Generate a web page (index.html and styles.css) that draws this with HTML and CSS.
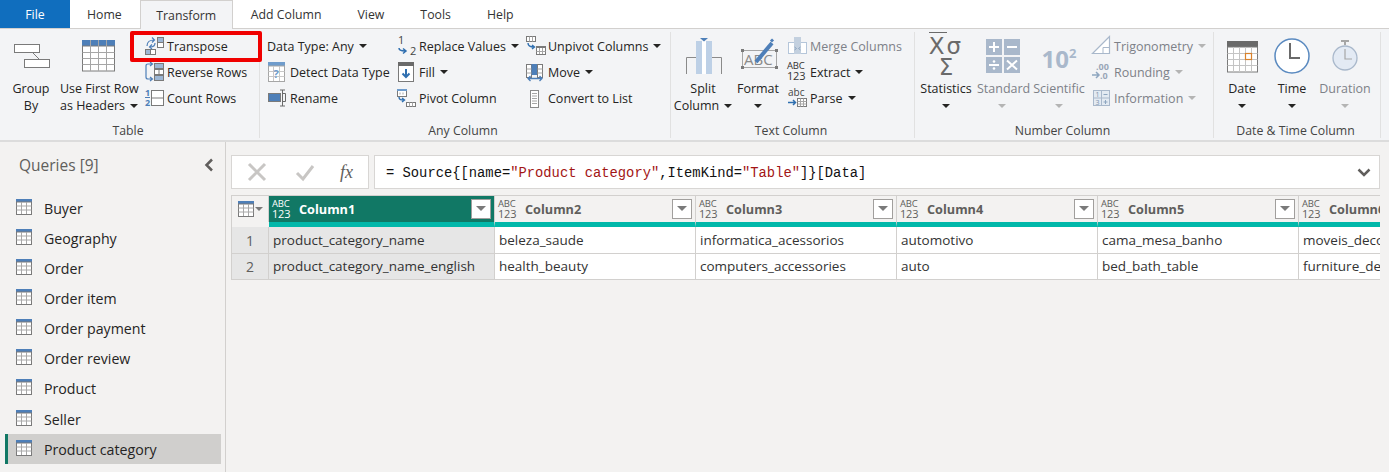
FILE: index.html
```html
<!DOCTYPE html>
<html lang="en">
<head>
<meta charset="utf-8">
<title>Power Query Editor</title>
<link rel="stylesheet" href="styles.css">
</head>
<body>
<svg class="defs" aria-hidden="true">
  <symbol id="tbl" viewBox="0 0 16 16">
    <rect x="0" y="0" width="16" height="3" fill="#4e7fb8"/>
    <rect x=".5" y="3" width="15" height="12.5" fill="#fff" stroke="#7a7a7a"/>
    <path d="M5.500 3v12M10.500 3v12M.5 7h15M.5 11h15" stroke="#a8a8a8" fill="none"/>
  </symbol>
</svg>

<nav class="tabs">
  <div class="tab tab-file">File</div>
  <div class="tab">Home</div>
  <div class="tab tab-active">Transform</div>
  <div class="tab">Add Column</div>
  <div class="tab">View</div>
  <div class="tab">Tools</div>
  <div class="tab">Help</div>
</nav>

<section class="ribbon">
  <div class="group g1">
    <div class="group-body">
      <div class="big w58 ml2">
        <svg class="big-ic" viewBox="0 0 58 47"><path d="M31 20l6 6" stroke="#7a7a7a" fill="none"/><rect x="12.500" y="11.500" width="25" height="8" fill="#fff" stroke="#7a7a7a"/><rect x="22.500" y="26.500" width="25" height="8" fill="#fff" stroke="#7a7a7a"/></svg>
        <div class="big-t">Group<br>By</div>
      </div>
      <div class="big w78">
        <svg class="big-ic" viewBox="0 0 78 47"><rect x="22" y="7" width="33" height="6" fill="#4e7fb8"/><rect x="22.500" y="13" width="32" height="25" fill="#fff" stroke="#7a7a7a"/><path d="M30.500 7v31M38.500 7v31M46.500 7v31M22.500 19.500h32M22.500 25.500h32M22.500 31.500h32" stroke="#a6a6a6" fill="none"/></svg>
        <div class="big-t">Use First Row<br>as Headers<i class="caret"></i></div>
      </div>
      <div class="col ml6">
        <div class="sm"><svg class="sm-ic" viewBox="0 0 23 22"><rect x="13.500" y="2.500" width="6" height="5" fill="#9db7d5" stroke="#7a7a7a"/><rect x="13.500" y="7.500" width="6" height="5" fill="#fff" stroke="#7a7a7a"/><rect x="1.500" y="14.500" width="5" height="5" fill="#9db7d5" stroke="#7a7a7a"/><rect x="6.500" y="14.500" width="5" height="5" fill="#fff" stroke="#7a7a7a"/><path d="M3 11C3 7 6 5 10 5M8 2.500L10.500 5 8 7.500M11 8c0 3-2 4-5 4M8 9.500L5.500 12 8 14" stroke="#4e7fb8" fill="none" stroke-width="1.200"/></svg><span>Transpose</span></div>
        <div class="sm"><svg class="sm-ic" viewBox="0 0 23 22"><path d="M8 3H4Q2 3 2 5V16Q2 18 4 18H8M6 1L8.500 3 6 5M6 16L8.500 18 6 20" stroke="#4e7fb8" fill="none" stroke-width="1.200"/><rect x="10.500" y="2.500" width="9" height="5" fill="#9db7d5" stroke="#7a7a7a"/><rect x="10.500" y="8.500" width="9" height="5" fill="#fff" stroke="#7a7a7a"/><path d="M15 8.500v5" stroke="#7a7a7a"/><rect x="10.500" y="14.500" width="9" height="5" fill="#9db7d5" stroke="#7a7a7a"/></svg><span>Reverse Rows</span></div>
        <div class="sm"><svg class="sm-ic" viewBox="0 0 23 22"><text class="ic-num" x="1" y="9">1</text><path d="M1 10.500h5" stroke="#4e7fb8"/><text class="ic-num" x="1" y="19">2</text><rect x="7.500" y="3.500" width="12" height="15" fill="#fff" stroke="#7a7a7a"/><path d="M7.500 11h12" stroke="#7a7a7a"/></svg><span>Count Rows</span></div>
      </div>
    </div>
    <div class="group-label">Table</div>
  </div>

  <div class="group g2">
    <div class="group-body">
      <div class="col w129">
        <div class="sm"><span>Data Type: Any</span><i class="caret"></i></div>
        <div class="sm"><svg class="sm-ic" viewBox="0 0 23 22"><rect x="1" y="1" width="17" height="4" fill="#6f9ccc"/><rect x="1.500" y="5" width="16" height="15.500" fill="#fff" stroke="#a6a6a6"/><path d="M6.500 5v15M12.500 5v15M1.500 10.500h16M1.500 15.500h16" stroke="#c8c8c8" fill="none"/><text class="ic-q" x="6.500" y="17">?</text></svg><span>Detect Data Type</span></div>
        <div class="sm"><svg class="sm-ic" viewBox="0 0 23 22"><rect x="1.500" y="6.500" width="12" height="8" fill="#4e7fb8" stroke="#7a7a7a"/><path d="M13 3h5M13 19h5M15.500 3v16M15.500 6.500h3v8h-3" stroke="#6a6a6a" fill="none"/></svg><span>Rename</span></div>
      </div>
      <div class="col w129">
        <div class="sm"><svg class="sm-ic" viewBox="0 0 23 22"><text class="ic-t" x="2" y="9">1</text><text class="ic-t" x="14" y="20">2</text><path d="M3 13c0 2 2 3 6 3M7 13.500L10 16 7 18.500" stroke="#2f6fb0" fill="none" stroke-width="1.500"/></svg><span>Replace Values</span><i class="caret"></i></div>
        <div class="sm"><svg class="sm-ic" viewBox="0 0 23 22"><rect x="2.500" y="1.500" width="15" height="19" fill="#fff" stroke="#7a7a7a"/><rect x="2" y="1" width="16" height="4" fill="#6a6a6a"/><path d="M10 8v8M6.500 12.500L10 16l3.500-3.500" stroke="#2f6fb0" fill="none" stroke-width="2"/></svg><span>Fill</span><i class="caret"></i></div>
        <div class="sm"><svg class="sm-ic" viewBox="0 0 23 22"><rect x="1.500" y="2.500" width="9" height="7" fill="#fff" stroke="#7a7a7a"/><rect x="1" y="2" width="10" height="2" fill="#6f9ccc"/><path d="M4 5.500v2M7 5.500v2" stroke="#a6a6a6"/><path d="M3 10c0 3 2 3 5 3M6 11l2.500 2L6 15" stroke="#2f6fb0" fill="none" stroke-width="1.400"/><rect x="10.500" y="15.500" width="9" height="4" fill="#fff" stroke="#7a7a7a"/><path d="M13.500 15.500v4M16.500 15.500v4" stroke="#a6a6a6"/></svg><span>Pivot Column</span></div>
      </div>
      <div class="col">
        <div class="sm"><svg class="sm-ic" viewBox="0 0 23 22"><rect x="1.500" y="1.500" width="9" height="5" fill="#fff" stroke="#7a7a7a"/><path d="M4.500 1.500v5M7.500 1.500v5" stroke="#a6a6a6"/><path d="M3 8c0 3 3 4 6 4M7 10l2.500 2L7 14" stroke="#2f6fb0" fill="none" stroke-width="1.400"/><rect x="11.500" y="11.500" width="9" height="8" fill="#fff" stroke="#7a7a7a"/><rect x="11" y="11" width="10" height="2" fill="#7a7a7a"/><path d="M14.500 13v6M17.500 13v6M11.500 16.500h9" stroke="#a6a6a6"/></svg><span>Unpivot Columns</span><i class="caret"></i></div>
        <div class="sm"><svg class="sm-ic" viewBox="0 0 23 22"><rect x="1.500" y="3.500" width="5" height="13" fill="#fff" stroke="#7a7a7a"/><rect x="6.500" y="3" width="6" height="11" fill="#4e7fb8"/><rect x="12.500" y="3.500" width="5" height="13" fill="#fff" stroke="#7a7a7a"/><path d="M1.500 8h5M1.500 12h5M12.500 8h5M12.500 12h5" stroke="#a6a6a6"/><path d="M3 17.500h14M5.500 15L3 17.500 5.500 20M14.500 15l2.500 2.500-2.500 2.500" stroke="#4e7fb8" fill="none" stroke-width="1.300"/></svg><span>Move</span><i class="caret"></i></div>
        <div class="sm"><svg class="sm-ic" viewBox="0 0 23 22"><rect x="5.500" y="3.500" width="8" height="17" fill="#fff" stroke="#8a8a8a"/><path d="M7 6.500h5M7 9h5M7 11.500h5M7 14h5M7 16.500h5" stroke="#a6a6a6"/></svg><span>Convert to List</span></div>
      </div>
    </div>
    <div class="group-label">Any Column</div>
  </div>

  <div class="group g3">
    <div class="group-body">
      <div class="big w64">
        <svg class="big-ic" viewBox="0 0 64 47"><path d="M15.500 41V24.500h10M50.500 41V24.500h-10" fill="none" stroke="#8a8a8a"/><rect x="25" y="8" width="6" height="33" fill="#bdd0e6"/><rect x="35" y="8" width="6" height="33" fill="#bdd0e6"/><path d="M31 8h4v33h-4z" fill="#fff"/><path d="M29 5h8l-4 3.500z" fill="#4e7fb8"/></svg>
        <div class="big-t">Split<br>Column<i class="caret"></i></div>
      </div>
      <div class="big w46">
        <svg class="big-ic" viewBox="0 0 46 47"><rect x="7.500" y="17.500" width="34" height="17" fill="none" stroke="#a6a6a6"/><rect x="6" y="16" width="3" height="3" fill="#7a7a7a"/><rect x="40" y="16" width="3" height="3" fill="#7a7a7a"/><rect x="6" y="33" width="3" height="3" fill="#7a7a7a"/><rect x="40" y="33" width="3" height="3" fill="#7a7a7a"/><text class="ic-abc" x="9" y="32">ABC</text><path d="M21 29L37 10" stroke="#4e7fb8" stroke-width="4" fill="none"/><path d="M38 8.500L36 6.500" stroke="#4e7fb8" stroke-width="3"/></svg>
        <div class="big-t">Format<br><i class="caret solo"></i></div>
      </div>
      <div class="col ml6">
        <div class="sm off"><svg class="sm-ic" viewBox="0 0 23 22"><rect x="1.500" y="7.500" width="18" height="11" fill="#fff" stroke="#b5c6da"/><rect x="7" y="2" width="7" height="17" fill="#c3d0df"/><path d="M7.500 12l2 1.500-2 1.500M13.500 12l-2 1.500 2 1.500" stroke="#8ea6c0" fill="none"/></svg><span>Merge Columns</span></div>
        <div class="sm"><span class="ic-abc123 sm-ic">ABC<br><em>123</em></span><span>Extract</span><i class="caret"></i></div>
        <div class="sm"><svg class="sm-ic" viewBox="0 0 23 22"><text class="ic-lc" x="1" y="9">abc</text><path d="M1 15.500h7M6 13l2.500 2.500L6 18" stroke="#2f6fb0" fill="none" stroke-width="1.500"/><rect x="10.500" y="11.500" width="9" height="8" fill="#fff" stroke="#7a7a7a"/><path d="M13.500 11.500v8M16.500 11.500v8M10.500 14.500h9M10.500 17h9" stroke="#a6a6a6"/></svg><span>Parse</span><i class="caret"></i></div>
      </div>
    </div>
    <div class="group-label">Text Column</div>
  </div>

  <div class="group g4">
    <div class="group-body">
      <div class="big w62">
        <div class="big-ic stat"><span class="stat-top"><span class="xbar">X</span>σ</span><span>Σ</span></div>
        <div class="big-t">Statistics<br><i class="caret solo"></i></div>
      </div>
      <div class="big w50 off">
        <svg class="big-ic" viewBox="0 0 50 47"><rect x="9" y="6" width="16" height="16" fill="#a9b8cb"/><rect x="27" y="6" width="16" height="16" fill="#a9b8cb"/><rect x="9" y="24" width="16" height="16" fill="#a9b8cb"/><rect x="27" y="24" width="16" height="16" fill="#a9b8cb"/><path d="M12 14h10M17 9v10M30 14h10M12 32h10M30 27.500l10 9M40 27.500l-10 9" stroke="#fff" stroke-width="2" fill="none"/><circle cx="17" cy="28.500" r="1.300" fill="#fff"/><circle cx="17" cy="35.500" r="1.300" fill="#fff"/></svg>
        <div class="big-t">Standard<br><i class="caret solo"></i></div>
      </div>
      <div class="big w52 ml6 off">
        <div class="big-ic sci">10<sup>2</sup></div>
        <div class="big-t">Scientific<br><i class="caret solo"></i></div>
      </div>
      <div class="col ml6">
        <div class="sm off"><svg class="sm-ic" viewBox="0 0 23 22"><path d="M1.500 18.500L18.500 1.500v17z" fill="#fff" stroke="#a9b8cb" stroke-width="1.200"/><path d="M12 18.500v-6h6.500" fill="none" stroke="#a9b8cb"/></svg><span>Trigonometry</span><i class="caret"></i></div>
        <div class="sm off"><svg class="sm-ic" viewBox="0 0 23 22"><text class="ic-rnd" x="5" y="9">.00</text><text class="ic-rnd" x="9" y="18">.0</text><path d="M1 14h7M5 11l3 3-3 3" stroke="#8ea6c0" fill="none" stroke-width="1.500"/></svg><span>Rounding</span><i class="caret"></i></div>
        <div class="sm off"><svg class="sm-ic" viewBox="0 0 23 22"><rect x="2.500" y="3.500" width="16" height="15" fill="#e3eaf2" stroke="#a9b8cb"/><path d="M10.500 3.500v15M2.500 11h16" stroke="#a9b8cb"/><text class="ic-info" x="4.500" y="10">1</text><text class="ic-info" x="4.500" y="17.500">3</text><path d="M12.500 7.500h4M12.500 15h4M14.500 13v4" stroke="#8ea6c0"/></svg><span>Information</span><i class="caret"></i></div>
      </div>
    </div>
    <div class="group-label">Number Column</div>
  </div>

  <div class="group g5">
    <div class="group-body">
      <div class="big w56">
        <svg class="big-ic" viewBox="0 0 56 47"><rect x="13" y="8" width="31" height="6" fill="#6a6a6a"/><rect x="13.500" y="14" width="30" height="25" fill="#fff" stroke="#7a7a7a"/><path d="M19.500 14v25M25.500 14v25M31.500 14v25M37.500 14v25M13.500 20.500h30M13.500 26.500h30M13.500 32.500h30" stroke="#c4c4c4" fill="none"/><rect x="31.500" y="20.500" width="6" height="6" fill="#fff" stroke="#d9822b" stroke-width="1.200"/></svg>
        <div class="big-t">Date<br><i class="caret solo"></i></div>
      </div>
      <div class="big w44">
        <svg class="big-ic" viewBox="0 0 44 47"><circle cx="22" cy="23" r="17" fill="#fff" stroke="#5a8ac0" stroke-width="1.500"/><path d="M20 10v15h10" fill="none" stroke="#6a6a6a" stroke-width="2"/></svg>
        <div class="big-t">Time<br><i class="caret solo"></i></div>
      </div>
      <div class="big w62 off">
        <svg class="big-ic" viewBox="0 0 62 47"><path d="M27 8h8M31 8v4" stroke="#a6a6a6" stroke-width="2" fill="none"/><circle cx="31" cy="25" r="12" fill="#e3eaf4" stroke="#a9b8cb" stroke-width="1.300"/><path d="M31 16v10h7" fill="none" stroke="#a6a6a6" stroke-width="1.200"/></svg>
        <div class="big-t">Duration<br><i class="caret solo"></i></div>
      </div>
    </div>
    <div class="group-label">Date &amp; Time Column</div>
  </div>
  <div class="highlight"></div>
</section>

<main class="main">
  <aside class="sidebar">
    <div class="side-head">
      <span>Queries [9]</span>
      <svg class="chev" viewBox="0 0 10 14"><path d="M8 1.500L2.500 7 8 12.500" fill="none" stroke="#605e5c" stroke-width="2.500"/></svg>
    </div>
    <ul class="queries">
      <li class="q"><svg class="q-ic"><use href="#tbl"/></svg>Buyer</li>
      <li class="q"><svg class="q-ic"><use href="#tbl"/></svg>Geography</li>
      <li class="q"><svg class="q-ic"><use href="#tbl"/></svg>Order</li>
      <li class="q"><svg class="q-ic"><use href="#tbl"/></svg>Order item</li>
      <li class="q"><svg class="q-ic"><use href="#tbl"/></svg>Order payment</li>
      <li class="q"><svg class="q-ic"><use href="#tbl"/></svg>Order review</li>
      <li class="q"><svg class="q-ic"><use href="#tbl"/></svg>Product</li>
      <li class="q"><svg class="q-ic"><use href="#tbl"/></svg>Seller</li>
      <li class="q q-sel"><svg class="q-ic"><use href="#tbl"/></svg>Product category</li>
    </ul>
  </aside>

  <div class="content">
    <div class="fbar">
      <div class="fbtns">
        <svg class="fb-ic" viewBox="0 0 20 20"><path d="M2 2l16 16M18 2L2 18" stroke="#c8c6c4" stroke-width="3" fill="none"/></svg>
        <svg class="fb-ic" viewBox="0 0 20 20"><path d="M2 11l6 6L18 4" stroke="#c8c6c4" stroke-width="3" fill="none"/></svg>
        <span class="fx">fx</span>
      </div>
      <div class="formula">
        <code>= Source{[name=<b>"Product category"</b>,ItemKind=<b>"Table"</b>]}[Data]</code>
        <svg class="fchev" viewBox="0 0 14 9"><path d="M1.500 1.500L7 7l5.500-5.500" fill="none" stroke="#605e5c" stroke-width="2.500"/></svg>
      </div>
    </div>

    <div class="grid">
      <div class="corner"><svg class="corner-ic"><use href="#tbl"/></svg><i class="caret grey"></i></div>
      <div class="ch ch-sel"><span class="abc">ABC<br><em>123</em></span><span class="ch-name">Column1</span><span class="fbtn"></span></div>
      <div class="ch"><span class="abc">ABC<br><em>123</em></span><span class="ch-name">Column2</span><span class="fbtn"></span></div>
      <div class="ch"><span class="abc">ABC<br><em>123</em></span><span class="ch-name">Column3</span><span class="fbtn"></span></div>
      <div class="ch"><span class="abc">ABC<br><em>123</em></span><span class="ch-name">Column4</span><span class="fbtn"></span></div>
      <div class="ch"><span class="abc">ABC<br><em>123</em></span><span class="ch-name">Column5</span><span class="fbtn"></span></div>
      <div class="ch"><span class="abc">ABC<br><em>123</em></span><span class="ch-name">Column6</span><span class="fbtn"></span></div>

      <div class="rn">1</div>
      <div class="c c-sel">product_category_name</div>
      <div class="c">beleza_saude</div>
      <div class="c">informatica_acessorios</div>
      <div class="c">automotivo</div>
      <div class="c">cama_mesa_banho</div>
      <div class="c">moveis_decoracao</div>

      <div class="rn">2</div>
      <div class="c c-sel">product_category_name_english</div>
      <div class="c">health_beauty</div>
      <div class="c">computers_accessories</div>
      <div class="c">auto</div>
      <div class="c">bed_bath_table</div>
      <div class="c">furniture_decor</div>
    </div>
  </div>
</main>
</body>
</html>
```
FILE: styles.css
```css
* { box-sizing: border-box; }
html, body { margin: 0; height: 100%; }
body {
  width: 1389px;
  height: 472px;
  overflow: hidden;
  background: #f3f2f1;
  color: #252423;
  font: 12.500px/17px "Open Sans", "Noto Sans", sans-serif;
}
.defs { display: none; }
em { font-style: normal; }

/* tabs */
.tabs {
  display: flex;
  height: 29px;
  background: #fff;
  border-bottom: 1px solid #d2d0ce;
  font-size: 12.300px;
  line-height: 29px;
}
.tab { padding: 0 18px; color: #333; }
.tab-file { width: 70px; height: 28px; padding: 0; text-align: center; background: #106ebe; color: #fff; }
.tab-file + .tab { padding-left: 17px; }
.tab-active {
  height: 29px;
  padding: 0 15.500px;
  background: #f3f4f6;
  border: 1px solid #d2d0ce;
  border-bottom: 0;
}

/* ribbon */
.ribbon {
  position: relative;
  display: flex;
  height: 113px;
  background: #f3f4f6;
  border-bottom: 2px solid #dcdcdc;
}
.group {
  display: flex;
  flex-direction: column;
  height: 111px;
  padding-top: 4px;
  position: relative;
}
.group::after {
  content: "";
  position: absolute;
  right: 0;
  top: 3px;
  bottom: 2px;
  width: 1px;
  background: #e1e1e1;
}
.g1 { width: 260px; }
.g2 { width: 411px; padding-left: 7px; }
.g3 { width: 244px; }
.g4 { width: 299px; }
.g5 { width: 167px; }
.group-body { display: flex; height: 90px; }
.group-label {
  height: 16px;
  padding-right: 4px;
  font-size: 12.300px;
  line-height: 16px;
  text-align: center;
  color: #444;
  white-space: nowrap;
}
.g2 .group-label { padding-right: 12px; }

.big { display: flex; flex-direction: column; align-items: stretch; text-align: center; white-space: nowrap; }
.big-ic { display: block; width: 100%; height: 47px; flex: none; overflow: visible; }
.big-t { line-height: 17px; }
.col { display: flex; flex-direction: column; }
.sm { display: flex; align-items: center; height: 26px; white-space: nowrap; }
.sm-ic { display: block; width: 23px; height: 22px; flex: none; overflow: visible; }
.off { color: #7d8188; }
.off .caret { border-top-color: #b4b4b4; }

.w44 { width: 44px; }
.w46 { width: 46px; }
.w50 { width: 50px; }
.w52 { width: 52px; }
.w56 { width: 56px; }
.w58 { width: 58px; }
.w62 { width: 62px; }
.w64 { width: 64px; }
.w78 { width: 78px; }
.w129 { width: 129px; }
.ml2 { margin-left: 2px; }
.ml6 { margin-left: 6px; }

.caret {
  display: inline-block;
  width: 0;
  height: 0;
  margin-left: 5px;
  vertical-align: 2px;
  border-left: 4px solid transparent;
  border-right: 4px solid transparent;
  border-top: 4px solid #252423;
}
.caret.solo { margin-left: 0; }
.caret.grey { border-top-color: #7a7a7a; margin-left: 1px; }

/* text inside icons */
.ic-num { font: 700 9px "Open Sans", sans-serif; fill: #4e7fb8; }
.ic-t { font: 11px "Open Sans", sans-serif; fill: #444; }
.ic-q { font: 700 11px "Open Sans", sans-serif; fill: #6f9ccc; }
.ic-abc { font: 15px "Open Sans", sans-serif; fill: #8a8a8a; }
.ic-lc { font: 10px "Open Sans", sans-serif; fill: #444; }
.ic-rnd { font: 700 9px "Open Sans", sans-serif; fill: #9aa7b8; }
.ic-info { font: 7px "Open Sans", sans-serif; fill: #7d93ad; }
.ic-abc123 { font-size: 9.500px; line-height: 10px; color: #333; letter-spacing: -.2px; }
.ic-abc123 em { font-size: 11px; }
.stat {
  display: flex;
  flex-direction: column;
  align-items: center;
  padding-top: 3px;
  font: 23px/21px "DejaVu Sans", sans-serif;
  color: #6a6a6a;
}
.stat-top { letter-spacing: 2px; }
.xbar { border-top: 1px solid #6a6a6a; }
.sci {
  padding-top: 10px;
  font: 700 24px/32px "Open Sans", sans-serif;
  color: #a9b8cb;
}
.sci sup { font-size: 13px; line-height: 0; vertical-align: 10px; }

.highlight {
  position: absolute;
  left: 130px;
  top: 2px;
  width: 132px;
  height: 31px;
  border: 4px solid #f00000;
  border-radius: 2px;
}

/* main */
.main { display: flex; height: 330px; }
.sidebar { width: 226px; flex: none; border-right: 1px solid #d2d0ce; }
.side-head {
  display: flex;
  align-items: center;
  justify-content: space-between;
  height: 51px;
  padding: 0 11px 5px 19px;
  font-size: 15.500px;
  color: #605e5c;
}
.chev { width: 10px; height: 14px; }
.queries { list-style: none; margin: 0; padding: 0; }
.q {
  display: flex;
  align-items: center;
  gap: 12px;
  height: 30.150px;
  margin: 0 4px 0 5px;
  padding-left: 11px;
  font-size: 14.200px;
}
.q-ic { width: 16px; height: 16px; flex: none; margin-top: -3px; }
.q-sel { background: #d0cfcd; border-left: 3px solid #117865; padding-left: 8px; }

.content { flex: 1; padding: 13px 9px 0 5px; }
.fbar { display: flex; gap: 5px; height: 34px; }
.fbtns {
  display: flex;
  align-items: center;
  width: 138px;
  padding-left: 15px;
  background: #fff;
  border: 1px solid #d8d6d4;
}
.fb-ic { width: 20px; height: 20px; flex: none; margin-right: 28px; }
.fx { font: italic 18px "Liberation Serif", serif; color: #605e5c; margin-left: -3px; }
.formula {
  flex: 1;
  display: flex;
  align-items: center;
  justify-content: space-between;
  padding: 0 8px 0 11px;
  background: #fff;
  border: 1px solid #d8d6d4;
}
.formula code { padding-top: 2px; font: 13.800px "Liberation Mono", monospace; color: #111; white-space: pre; }
.formula b { font-weight: 400; color: #a31515; }
.fchev { width: 14px; height: 9px; }

.grid {
  display: grid;
  grid-template-columns: 37px 226px repeat(5, 201px);
  grid-template-rows: 31px 27px 26px;
  width: 1149px;
  margin-top: 6px;
  overflow: hidden;
  border-top: 1px solid #d2d0ce;
  border-left: 1px solid #d2d0ce;
}
.corner {
  display: flex;
  align-items: center;
  justify-content: center;
  height: 26px;
  border-right: 1px solid #d2d0ce;
}
.corner-ic { width: 16px; height: 16px; }
.ch {
  display: flex;
  align-items: center;
  padding: 0 3px 0 3px;
  border-right: 1px solid #d2d0ce;
  border-bottom: 5px solid #01b8aa;
  color: #605e5c;
  font-size: 12.700px;
  font-weight: 700;
  white-space: nowrap;
  overflow: hidden;
}
.ch-sel { background: #117865; color: #fff; }
.abc { width: 18px; flex: none; font-size: 9.500px; font-weight: 400; line-height: 10px; letter-spacing: -.2px; }
.abc em { font-size: 11px; }
.ch-name { flex: 1; margin-left: 9px; overflow: visible; }
.fbtn {
  position: relative;
  flex: none;
  width: 20px;
  height: 20px;
  background: #fff;
  border: 1px solid #a19f9d;
}
.fbtn::after {
  content: "";
  position: absolute;
  left: 4px;
  top: 6px;
  border-left: 5px solid transparent;
  border-right: 5px solid transparent;
  border-top: 5px solid #7a7a7a;
}
.rn, .c {
  display: flex;
  align-items: center;
  border-right: 1px solid #d2d0ce;
  border-bottom: 1px solid #d2d0ce;
  white-space: nowrap;
  overflow: hidden;
}
.rn { justify-content: center; background: #e6e6e6; font-size: 14px; color: #605e5c; }
.c { padding-left: 4px; background: #fff; color: #333; font-size: 13.500px; }
.c-sel { background: #e6e6e6; }
```
